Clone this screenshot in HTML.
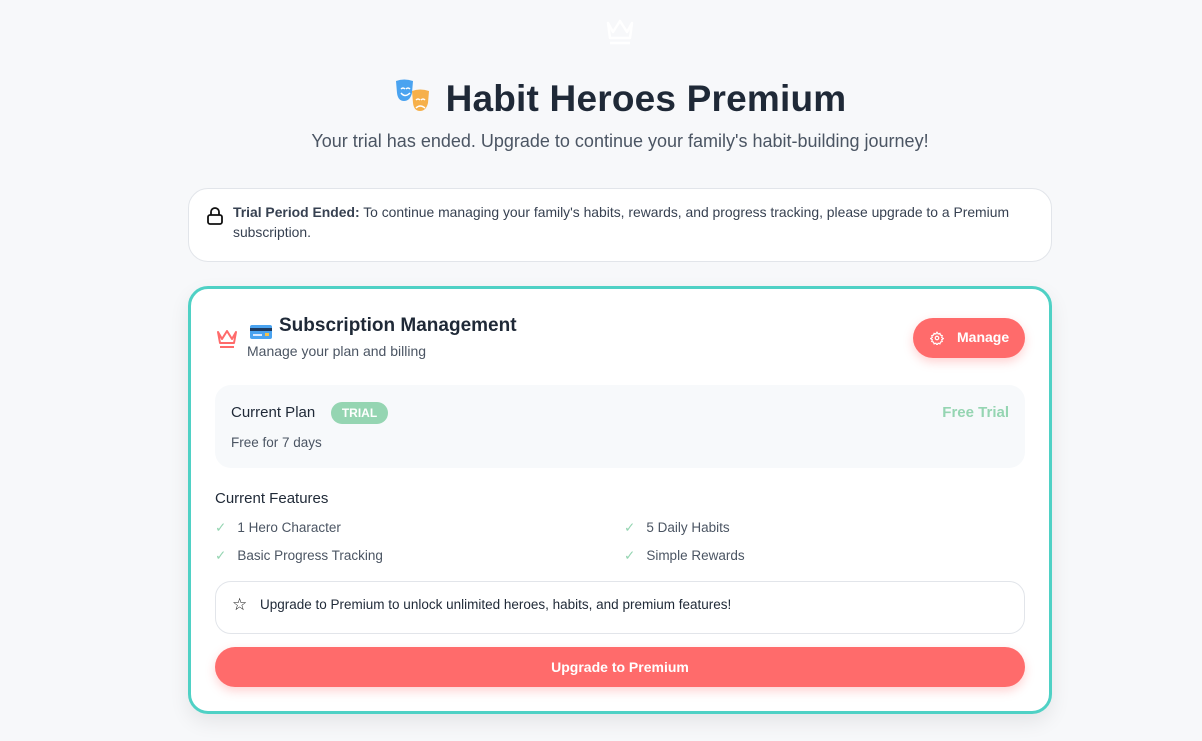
<!DOCTYPE html>
<html><head><meta charset="utf-8"><style>
*{box-sizing:border-box;margin:0;padding:0}
body{width:1202px;height:741px;background:#f7f8fa;font-family:"Liberation Sans",sans-serif;color:#1f2937;position:relative;overflow:hidden}
.abs{position:absolute}
h1{position:absolute;left:38px;right:0;top:77px;text-align:center;font-size:37px;font-weight:bold;color:#1f2937;letter-spacing:0.2px}
.sub{top:131px;left:38px;right:0;text-align:center;font-size:18px;color:#4b5563}
.alert{left:188px;top:188px;width:864px;height:74px;border:1px solid #e2e5ea;border-radius:20px;background:#fff}
.card{left:188px;top:286px;width:864px;height:428px;border:3px solid #4fd1c5;border-radius:20px;background:#fff;box-shadow:0 8px 20px rgba(0,0,0,.08)}
.t{font-size:14px;color:#4b5563}
</style></head><body>
<svg class="abs" style="left:605px;top:18px" width="30" height="28" viewBox="0 0 30 28" fill="none" stroke="#fff" stroke-width="2.5" stroke-linejoin="round"><path d="M3 5 L8 14 L15 3 L22 14 L27 5 L25 20 H5 Z"/><path d="M5 25 H25"/></svg>
<h1><span style="display:inline-block;width:38px;height:36px;position:relative;vertical-align:-4px;margin-right:14px">
<svg width="38" height="38" viewBox="0 0 38 38"><path d="M2 4 Q10 1 19 4 L18 16 Q16 24 10 24 Q4 24 3 16 Z" fill="#4aa3f0"/><path d="M7 12 q2-2 4 0 M12 12 q2-2 4 0 M7 16 q4 5 9 0" stroke="#fff" stroke-width="1.5" fill="none"/><path d="M18 14 Q26 11 35 14 L34 26 Q32 34 26 34 Q20 34 19 26 Z" fill="#f6b04a"/><path d="M22 23 q2-2 4 0 M27 23 q2-2 4 0 M22 31 q4-4 9 0" stroke="#fff" stroke-width="1.5" fill="none"/></svg></span>Habit Heroes Premium</h1>
<div class="abs sub">Your trial has ended. Upgrade to continue your family's habit-building journey!</div>
<div class="abs alert">
<svg class="abs" style="left:17px;top:17px" width="18" height="20" viewBox="0 0 18 20" fill="none" stroke="#111" stroke-width="1.8"><rect x="2" y="9" width="14" height="9" rx="2"/><path d="M5 9V6a4 4 0 0 1 8 0v3"/></svg>
<div class="abs" style="left:44px;top:13px;width:800px;font-size:13.9px;line-height:20px;color:#374151"><b>Trial Period Ended:</b> To continue managing your family's habits, rewards, and progress tracking, please upgrade to a Premium subscription.</div>
</div>
<div class="abs card">
<svg class="abs" style="left:25px;top:39px" width="22" height="22" viewBox="0 0 22 22" fill="none" stroke="#ff6b6b" stroke-width="2" stroke-linejoin="round"><path d="M2 4 L6 11 L11 3 L16 11 L20 4 L18 15 H4 Z"/><path d="M4 19 H18"/></svg>
<svg class="abs" style="left:59px;top:35px" width="22" height="16" viewBox="0 0 22 16"><rect x="0" y="1" width="22" height="14" rx="2" fill="#4aa3f0"/><rect x="0" y="4" width="22" height="3" fill="#1e3a5f"/><rect x="3" y="10" width="9" height="2" fill="#dbeafe"/><rect x="15" y="9" width="4" height="3" fill="#f6c24a"/></svg>
<div class="abs" style="left:88px;top:26px;font-size:19px;font-weight:bold;color:#1f2937">Subscription Management</div>
<div class="abs t" style="left:56px;top:54px">Manage your plan and billing</div>
<div class="abs" style="left:722px;top:29px;width:112px;height:40px;border-radius:20px;background:#ff6b6b;color:#fff;font-weight:bold;font-size:14px;box-shadow:0 4px 10px rgba(255,107,107,.3)">
<svg class="abs" style="left:17px;top:13px" width="14" height="14" viewBox="0 0 24 24" fill="none" stroke="#fff" stroke-width="2"><circle cx="12" cy="12" r="3"/><path d="M12 2l2 3 3-1 1 3 3 1-1 3 3 2-3 2 1 3-3 1-1 3-3-1-2 3-2-3-3 1-1-3-3-1 1-3-3-2 3-2-1-3 3-1 1-3 3 1z"/></svg>
<span class="abs" style="left:44px;top:11px">Manage</span></div>
<div class="abs" style="left:24px;top:96px;width:810px;height:83px;border-radius:16px;background:#f7f9fb">
<div class="abs" style="left:16px;top:19px;font-size:15px;color:#1f2937">Current Plan</div>
<div class="abs" style="left:116px;top:17px;width:57px;height:22px;border-radius:11px;background:#95d5b2;color:#fff;font-size:12px;font-weight:bold;text-align:center;line-height:22px">TRIAL</div>
<div class="abs" style="right:16px;top:19px;font-size:15px;font-weight:bold;color:#95d5b2">Free Trial</div>
<div class="abs t" style="left:16px;top:50px;font-size:13.5px">Free for 7 days</div>
</div>
<div class="abs" style="left:24px;top:201px;font-size:15px;color:#1f2937">Current Features</div>
<div class="abs t" style="left:24px;top:231px;font-size:13.5px"><span style="color:#95d5b2;margin-right:11px">✓</span>1 Hero Character</div>
<div class="abs t" style="left:24px;top:259px;font-size:13.5px"><span style="color:#95d5b2;margin-right:11px">✓</span>Basic Progress Tracking</div>
<div class="abs t" style="left:433px;top:231px;font-size:13.5px"><span style="color:#95d5b2;margin-right:11px">✓</span>5 Daily Habits</div>
<div class="abs t" style="left:433px;top:259px;font-size:13.5px"><span style="color:#95d5b2;margin-right:11px">✓</span>Simple Rewards</div>
<div class="abs" style="left:24px;top:292px;width:810px;height:53px;border:1px solid #e2e5ea;border-radius:16px">
<span class="abs" style="left:16px;top:13px;font-size:17px;color:#111">☆</span>
<span class="abs" style="left:44px;top:15px;font-size:13.5px;color:#1f2937">Upgrade to Premium to unlock unlimited heroes, habits, and premium features!</span></div>
<div class="abs" style="left:24px;top:358px;width:810px;height:40px;border-radius:20px;background:#ff6b6b;color:#fff;font-weight:bold;font-size:14px;text-align:center;line-height:40px;box-shadow:0 4px 10px rgba(255,107,107,.3)">Upgrade to Premium</div>
</div>
</body></html>
